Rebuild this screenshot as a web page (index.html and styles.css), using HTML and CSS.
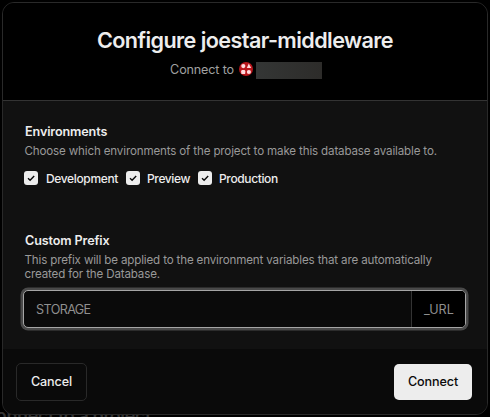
FILE: index.html
```html
<!DOCTYPE html>
<html lang="en">
<head>
<meta charset="utf-8">
<title>Configure joestar-middleware</title>
<link rel="stylesheet" href="styles.css">
</head>
<body>
<div class="backdrop-title">Connect to a project</div>
<main class="modal">
  <header class="header">
    <h1 class="title">Configure joestar-middleware</h1>
    <div class="subtitle">
      <span class="connect-to">Connect to</span>
      <svg class="avatar" viewBox="0 0 14 14"><circle cx="7" cy="7" r="7" fill="#b9151b"/><g fill="#ffd9dc"><circle cx="4.3" cy="4.1" r="2.1"/><path d="M9.8 1.6 12.2 6H7.8z"/><rect x="2.2" y="8" width="4.1" height="4.1" rx="1.2"/><circle cx="9.9" cy="10" r="2.1"/></g></svg>
      <span class="redacted"></span>
    </div>
  </header>
  <section class="content">
    <h2 class="heading">Environments</h2>
    <p class="desc">Choose which environments of the project to make this database available to.</p>
    <div class="checks">
      <label class="check"><svg class="box" viewBox="0 0 14 14"><rect width="14" height="14" rx="3" fill="#ededed"/><path d="M4 7.2 6.1 9.2 10.2 5" fill="none" stroke="#0a0a0a" stroke-width="1.4"/></svg><span>Development</span></label>
      <label class="check"><svg class="box" viewBox="0 0 14 14"><rect width="14" height="14" rx="3" fill="#ededed"/><path d="M4 7.2 6.1 9.2 10.2 5" fill="none" stroke="#0a0a0a" stroke-width="1.4"/></svg><span>Preview</span></label>
      <label class="check"><svg class="box" viewBox="0 0 14 14"><rect width="14" height="14" rx="3" fill="#ededed"/><path d="M4 7.2 6.1 9.2 10.2 5" fill="none" stroke="#0a0a0a" stroke-width="1.4"/></svg><span>Production</span></label>
    </div>
    <h2 class="heading second">Custom Prefix</h2>
    <p class="desc">This prefix will be applied to the environment variables that are automatically<br>created for the Database.</p>
    <div class="field">
      <div class="value">STORAGE</div>
      <div class="suffix">_URL</div>
    </div>
  </section>
  <footer class="footer">
    <button class="btn cancel">Cancel</button>
    <button class="btn connect">Connect</button>
  </footer>
</main>
</body>
</html>
```
FILE: styles.css
```css
* { box-sizing: border-box; margin: 0; padding: 0; }
body { position: relative; width: 490px; height: 417px; overflow: hidden; background: #000; font-family: Inter, "Liberation Sans", sans-serif; color: #ededed; }
.backdrop-title { position: absolute; left: -17px; top: 404px; font-size: 18px; line-height: 24px; font-weight: 600; letter-spacing: -.4px; white-space: nowrap; color: #333; }
.modal { position: relative; display: flex; flex-direction: column; width: 486px; height: 413px; margin: 2px 0 0 2px; border: 1px solid #292929; border-radius: 12px; background: #111; overflow: hidden; white-space: nowrap; }
.header { height: 98px; background: #000; border-bottom: 1px solid #333; padding-top: 23px; display: flex; flex-direction: column; align-items: center; }
.title { font-size: 21.6px; line-height: 28px; font-weight: 600; letter-spacing: -.58px; }
.subtitle { display: flex; align-items: center; height: 20px; margin: 5px 0 0 2px; font-size: 12.6px; letter-spacing: -.16px; color: #a1a1a1; }
.avatar { width: 14px; height: 14px; margin-left: 5px; }
.redacted { width: 66px; height: 17px; margin: 2px 0 0 3px; background: linear-gradient(90deg, #343635, #2d2c2a); }
.content { height: 248px; padding: 22px 20px 0 22px; }
.heading { font-size: 12.6px; line-height: 18px; font-weight: 600; letter-spacing: -.12px; }
.heading.second { margin-top: 47px; }
.desc { margin: 3px 0 0 -.5px; font-size: 11.6px; line-height: 14px; letter-spacing: -.155px; color: #999; }
.checks { display: flex; gap: 8px; margin: 12px 0 0 -1px; height: 15px; }
.check { display: flex; align-items: center; height: 15px; gap: 8px; font-size: 12px; font-weight: 500; letter-spacing: -.35px; }
.check + .check { gap: 7px; letter-spacing: -.38px; }
.check span { position: relative; top: .5px; }
.box { width: 14px; height: 14px; flex: none; }
.field { display: flex; width: 443px; height: 38px; margin: 9px 0 0 -2px; border: 1px solid #a5a5a5; border-radius: 5px; background: #0a0a0a; box-shadow: 0 0 0 2.5px #494949; overflow: hidden; font-size: 12.6px; line-height: 37px; color: #8f8f8f; }
.value { flex: 1; padding-left: 12px; letter-spacing: -.6px; }
.suffix { width: 54px; padding-left: 12px; border-left: 1px solid #333; background: #000; }
.footer { display: flex; justify-content: space-between; align-items: center; flex: 1; padding: 0 15px 0 13px; background: #0a0a0a; }
.btn { height: 36px; border: 0; border-radius: 5px; font: 500 12.6px/36px Inter, "Liberation Sans", sans-serif; letter-spacing: -.12px; }
.cancel { width: 71px; height: 38px; border: 1px solid #292929; background: #0a0a0a; color: #ededed; }
.connect { width: 78px; background: #ededed; color: #0a0a0a; }
```
